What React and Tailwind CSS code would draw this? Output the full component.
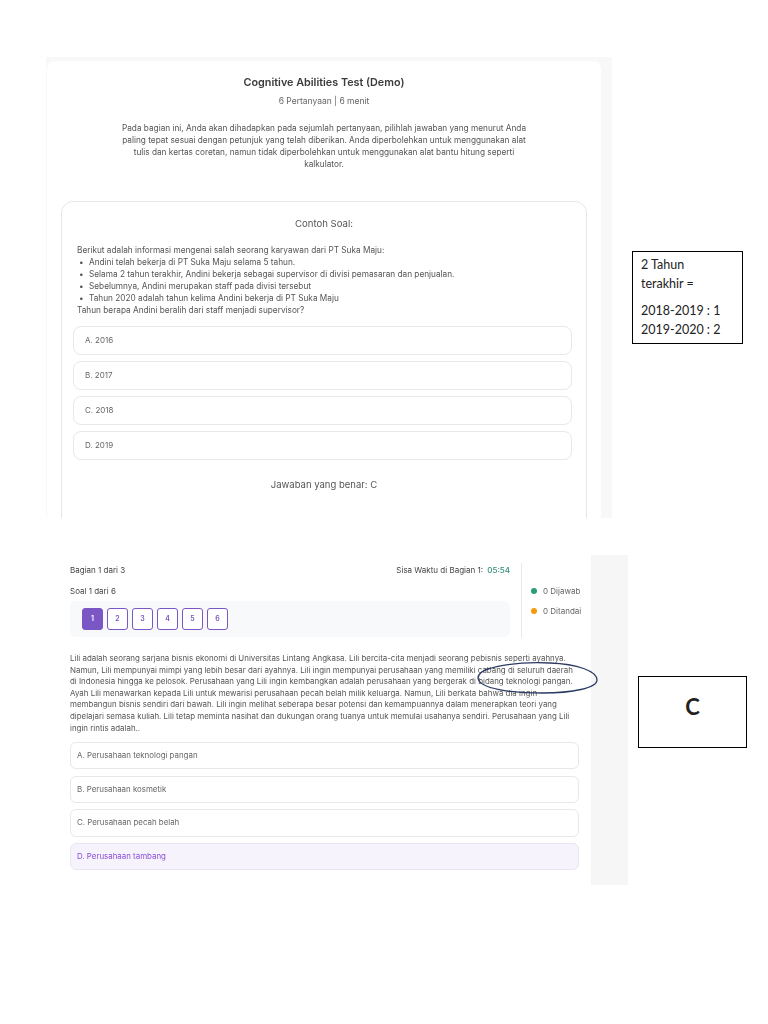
import React from "react";

const sampleOptions = ["A. 2016", "B. 2017", "C. 2018", "D. 2019"];
const sampleFacts = [
  "Andini telah bekerja di PT Suka Maju selama 5 tahun.",
  "Selama 2 tahun terakhir, Andini bekerja sebagai supervisor di divisi pemasaran dan penjualan.",
  "Sebelumnya, Andini merupakan staff pada divisi tersebut",
  "Tahun 2020 adalah tahun kelima Andini bekerja di PT Suka Maju",
];
const questionOptions = [
  { label: "A. Perusahaan teknologi pangan", tops: "h-[27px] mb-[7px]" },
  { label: "B. Perusahaan kosmetik", tops: "h-[27px] mb-[6px]" },
  { label: "C. Perusahaan pecah belah", tops: "h-[28px] mb-[6px]" },
];

const DemoPanel = () => (
  <div className="w-[566px] h-[461px] shrink-0 overflow-hidden bg-[#f8f8f8] pt-[4px] pl-[1px] blur-[0.45px]">
    <div className="w-[554px] h-[500px] bg-white rounded-t-lg pt-[15px] px-[14px]">
      <h1 className="text-center text-[10.8px] leading-[14px] font-semibold text-[#3a3a3a]">
        Cognitive Abilities Test (Demo)
      </h1>
      <p className="mt-[5px] text-center text-[8.5px] leading-[12px] text-[#666]">
        6 Pertanyaan | 6 menit
      </p>
      <p className="mt-[15px] mx-auto w-[410px] text-center text-[8.25px] leading-[12px] text-[#555]">
        Pada bagian ini, Anda akan dihadapkan pada sejumlah pertanyaan, pilihlah jawaban yang menurut Anda paling tepat sesuai dengan petunjuk yang telah diberikan. Anda diperbolehkan untuk menggunakan alat tulis dan kertas coretan, namun tidak diperbolehkan untuk menggunakan alat bantu hitung seperti kalkulator.
      </p>
      <div className="mt-[31px] h-[340px] border border-[#e6e6e6] rounded-xl px-[15px] pt-[15px]">
        <h2 className="text-center text-[9.6px] leading-[14px] text-[#555]">Contoh Soal:</h2>
        <div className="mt-[13px] text-[8.25px] leading-[12px] text-[#555]">
          <p>Berikut adalah informasi mengenai salah seorang karyawan dari PT Suka Maju:</p>
          <ul>
            {sampleFacts.map((fact) => (
              <li key={fact} className="flex">
                <span className="w-[12px] pl-[2px]">•</span>
                <span>{fact}</span>
              </li>
            ))}
          </ul>
          <p>Tahun berapa Andini beralih dari staff menjadi supervisor?</p>
        </div>
        <div className="mt-[10px] flex flex-col gap-[6px] -ml-[4px] w-[499px]">
          {sampleOptions.map((option) => (
            <div
              key={option}
              className="h-[29px] flex items-center pl-[11px] pb-[2px] border border-[#e8e8e8] rounded-lg text-[8px] text-[#666]"
            >
              {option}
            </div>
          ))}
        </div>
        <p className="mt-[18px] text-center text-[9.5px] leading-[14px] text-[#555]">
          Jawaban yang benar: C
        </p>
      </div>
    </div>
  </div>
);

const QuestionPanel = () => (
  <div className="relative w-[572px] h-[330px] shrink-0 flex">
    <div className="w-[535px] h-full bg-white pl-[14px] blur-[0.45px]">
      <div className="flex h-[83px] pt-[8px]">
        <div className="w-[440px]">
          <div className="flex justify-between h-[14px] items-center text-[8px] text-[#444]">
            <span>Bagian 1 dari 3</span>
            <span>
              Sisa Waktu di Bagian 1: <span className="ml-[2px] font-medium text-[#2f8f78]">05:54</span>
            </span>
          </div>
          <p className="mt-[7px] text-[8px] leading-[14px] text-[#444]">Soal 1 dari 6</p>
          <div className="mt-[3px] h-[36px] bg-[#f8f9fb] rounded-md flex items-center pl-[12px] gap-[4px]">
            {[1, 2, 3, 4, 5, 6].map((n) => (
              <div
                key={n}
                className={`w-[21px] h-[22px] flex items-center justify-center rounded-[3px] border border-[#7a57c4] text-[7px] font-semibold ${
                  n === 1 ? "bg-[#7a57c4] text-white" : "bg-white text-[#7a57c4]"
                }`}
              >
                {n}
              </div>
            ))}
          </div>
        </div>
        <div className="ml-[11px] pl-[9px] h-[75px] border-l border-[#e8e8e8] text-[8px] text-[#666] pt-[22px]">
          <div className="flex items-center gap-[6px] h-[12px]">
            <span className="w-[6px] h-[6px] rounded-full bg-[#2a9d78]"></span>0 Dijawab
          </div>
          <div className="mt-[8px] flex items-center gap-[6px] h-[12px]">
            <span className="w-[6px] h-[6px] rounded-full bg-[#f59a0c]"></span>0 Ditandai
          </div>
        </div>
      </div>
      <p className="mt-[15px] w-[507px] text-[7.92px] leading-[11.6px] text-[#555]">
        Lili adalah seorang sarjana bisnis ekonomi di Universitas Lintang Angkasa. Lili bercita-cita menjadi seorang pebisnis seperti ayahnya. Namun, Lili mempunyai mimpi yang lebih besar dari ayahnya. Lili ingin mempunyai perusahaan yang memiliki cabang di seluruh daerah di Indonesia hingga ke pelosok. Perusahaan yang Lili ingin kembangkan adalah perusahaan yang bergerak di bidang teknologi pangan. Ayah Lili menawarkan kepada Lili untuk mewarisi perusahaan pecah belah milik keluarga. Namun, Lili berkata bahwa dia ingin membangun bisnis sendiri dari bawah. Lili ingin melihat seberapa besar potensi dan kemampuannya dalam menerapkan teori yang dipelajari semasa kuliah. Lili tetap meminta nasihat dan dukungan orang tuanya untuk memulai usahanya sendiri. Perusahaan yang Lili ingin rintis adalah..
      </p>
      <div className="mt-[8px] w-[509px]">
        {questionOptions.map((option) => (
          <div
            key={option.label}
            className={`${option.tops} flex items-center pl-[6px] border border-[#e8e8e8] rounded-md text-[7.9px] text-[#666]`}
          >
            {option.label}
          </div>
        ))}
        <div className="h-[27px] flex items-center pl-[6px] border border-[#e9e6f2] rounded-md bg-[#f6f3fd] text-[7.9px] text-[#8a4fd8]">
          D. Perusahaan tambang
        </div>
      </div>
    </div>
    <div className="w-[37px] h-full bg-[#f6f6f6]"></div>
    {/* hand-drawn circle around the answer */}
    <svg className="absolute left-[421px] top-[104px]" width="124" height="36" viewBox="0 0 124 36" fill="none">
      <path
        d="M8 11C25 5 50 3 73 4C100 5 120 12 120 21C120 29 95 34 66 34C35 34 2 30 1 19C1 15 6 11 14 9"
        stroke="#2b3a63"
        strokeWidth="1.3"
      />
    </svg>
  </div>
);

const App = () => {
  return (
    <div className="relative w-[768px] h-[1024px] bg-white overflow-hidden font-['Inter',sans-serif]">
      <div className="flex pt-[57px] pl-[46px]">
        <DemoPanel />
        <div className="ml-[20px] mt-[194px] w-[111px] h-[93px] border border-black pl-[8px] pt-[3px] font-['Lato',sans-serif] text-[12.5px] leading-[19px] text-[#222]">
          <p>2 Tahun</p>
          <p>terakhir =</p>
          <p className="mt-[8px]">2018-2019 : 1</p>
          <p>2019-2020 : 2</p>
        </div>
      </div>
      <div className="flex mt-[37px] pl-[56px]">
        <QuestionPanel />
        <div className="ml-[10px] mt-[121px] w-[109px] h-[72px] border border-black flex items-center justify-center pb-[12px] font-['Lato',sans-serif] text-[22px] font-bold text-[#222]">
          C
        </div>
      </div>
    </div>
  );
};

export default App;
